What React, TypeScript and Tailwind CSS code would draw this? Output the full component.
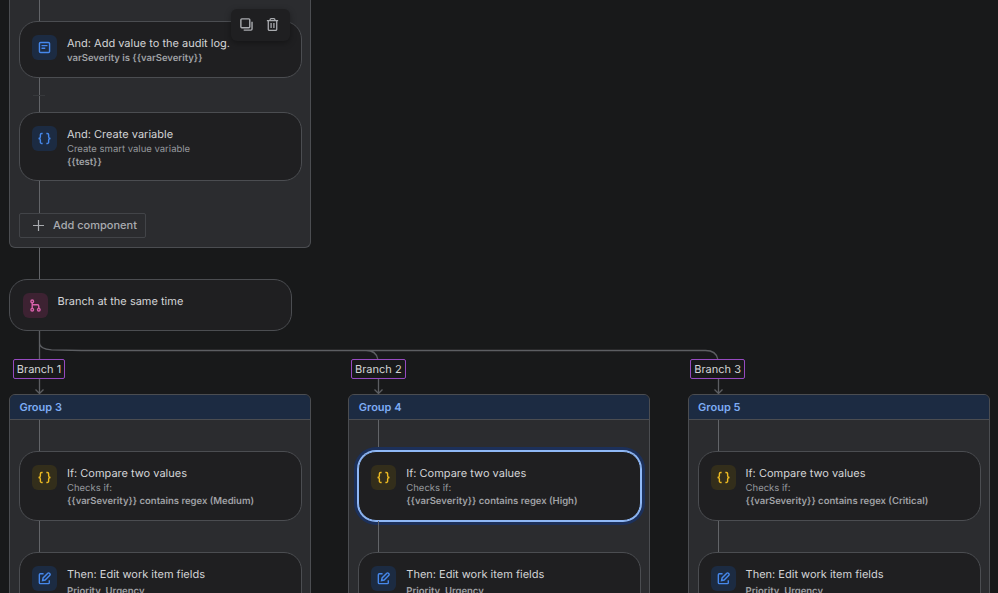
import type { ReactNode } from "react";
import clsx from "clsx";

type IconName = "log" | "blue-braces" | "yellow-braces" | "edit" | "branch";

const iconColors: Record<IconName, string> = {
  log: "bg-[#1c2b42] text-[#4688ec]",
  "blue-braces": "bg-[#1c2b42] text-[#4688ec]",
  "yellow-braces": "bg-[#332e1b] text-[#eebb22]",
  edit: "bg-[#1c2b42] text-[#4688ec]",
  branch: "bg-[#3d2232] text-[#da62ac]",
};

function Icon({ name }: { name: IconName }) {
  return (
    <div
      className={clsx(
        "flex size-[25px] shrink-0 items-center justify-center rounded-[6px]",
        iconColors[name],
      )}>
      <svg
        viewBox="0 0 16 16"
        className="size-[15px]"
        fill="none"
        stroke="currentColor"
        strokeWidth="1.5">
        {name === "log" && (
          <>
            <rect x="2.6" y="2.6" width="10.8" height="10.8" rx="1.2" />
            <path d="M4.8 6h6.4M4.8 8.8h4" />
          </>
        )}
        {(name === "blue-braces" || name === "yellow-braces") && (
          <path d="M6 2.7h-1a1.4 1.4 0 0 0-1.400 1.400v2.400c0 .9-.5 1.500-2 1.500 1.500 0 2 .6 2 1.500v2.400a1.400 1.400 0 0 0 1.400 1.400H6M10 2.700h1a1.400 1.400 0 0 1 1.400 1.400v2.400c0 .9.5 1.500 2 1.500-1.500 0-2 .6-2 1.500v2.400a1.400 1.400 0 0 1-1.400 1.400H10" />
        )}
        {name === "edit" && (
          <>
            <path d="M7 2.900H3.500a1 1 0 0 0-1 1v8.600a1 1 0 0 0 1 1h8.600a1 1 0 0 0 1-1V9.800" />
            <path d="m5.900 10.200.6-2.800 5-5a1.200 1.200 0 0 1 1.700 0l.5.5a1.200 1.200 0 0 1 0 1.700l-5 5z" />
          </>
        )}
        {name === "branch" && (
          <>
            <circle cx="4.500" cy="3.600" r="1.400" />
            <circle cx="4.500" cy="12.500" r="1.400" />
            <circle cx="11.500" cy="12.500" r="1.400" />
            <path d="M4.500 5v6M4.500 7.200h5.500a1.500 1.500 0 0 1 1.500 1.500v2.400" />
          </>
        )}
      </svg>
    </div>
  );
}

type CardProps = {
  icon: IconName;
  title: string;
  caption?: string;
  detail?: string;
  selected?: boolean;
  className?: string;
};

function Card({ icon, title, caption, detail, selected, className }: CardProps) {
  return (
    <div
      className={clsx(
        "flex w-[283px] shrink-0 gap-[10px] rounded-[18px] border bg-[#1f1f21] pt-[13px]",
        icon === "branch" ? "pl-[12.500px]" : "pl-3",
        selected
          ? "border-[#8fb8f6] shadow-[0_0_0_1px_#8fb8f6,0_0_0_4px_#1c305a]"
          : "border-[#4b4d51]",
        className,
      )}>
      <Icon name={icon} />
      <div className="whitespace-nowrap">
        <div className="text-[11px] leading-4 text-[#d4d5d7]">{title}</div>
        {caption && (
          <div className="mt-0.5 text-[9.500px] leading-[12.500px] text-[#96999e]">{caption}</div>
        )}
        {detail && (
          <div
            className={clsx(
              "text-[9.500px] leading-[12.500px] font-semibold text-[#a0a2a6]",
              !caption && (icon === "edit" ? "mt-1" : "mt-0.5"),
            )}>
            {detail}
          </div>
        )}
      </div>
    </div>
  );
}

function Line({ className }: { className: string }) {
  return <div className={clsx("w-px shrink-0 bg-[#626468]", className)} />;
}

function Group({ title, children }: { title: string; children: ReactNode }) {
  return (
    <div className="h-[220px] w-[302px] overflow-hidden rounded-[6px] border border-[#4b4d51] bg-[#2b2c2f]">
      <div className="h-[25px] border-b border-[#4b4d51] bg-[#1c2b42] pl-[9.500px] text-[11px] leading-6 font-semibold text-[#7eadf5]">
        {title}
      </div>
      <div className="flex flex-col pl-[9px]">{children}</div>
    </div>
  );
}

function BranchColumn({
  branch,
  group,
  value,
  selected,
}: {
  branch: string;
  group: string;
  value: string;
  selected?: boolean;
}) {
  return (
    <div className="flex w-[302px] shrink-0 flex-col">
      <div className="flex w-[60px] flex-col items-center">
        <div className="flex h-5 items-center rounded-[2px] border border-[#964ac0] bg-[#18191a] px-[3px] text-[11px] whitespace-nowrap text-[#d4d5d7]">
          {branch}
        </div>
        <svg viewBox="0 0 10 15" className="h-[15px] w-[10px]" fill="none" stroke="#5c5e62" strokeWidth="1.300">
          <path d="M5.500 0v14M1.500 10.500l4 4 4-4" />
        </svg>
      </div>
      <Group title={group}>
        <Line className="ml-[20px] h-[31px]" />
        <Card
          icon="yellow-braces"
          title="If: Compare two values"
          caption="Checks if:"
          detail={"{{varSeverity}} contains regex (" + value + ")"}
          selected={selected}
          className="h-[70px]"
        />
        <Line className="ml-[20px] h-[31px]" />
        <Card icon="edit" title="Then: Edit work item fields" detail="Priority, Urgency" className="h-[70px]" />
      </Group>
    </div>
  );
}

function HoverActions() {
  return (
    <div className="absolute top-[9px] left-[231px] flex h-8 w-[59px] items-center gap-[11px] rounded-[6px] bg-[#1f1f21] pb-px pl-2 text-[#a9abaf] shadow-[0_2px_6px_rgba(0,0,0,0.35)]">
      <svg viewBox="0 0 16 16" className="size-[15px]" fill="none" stroke="currentColor" strokeWidth="1.500">
        <rect x="2" y="2" width="9.500" height="9.500" rx="1" />
        <path d="M13.900 5v7.800a1.200 1.200 0 0 1-1.200 1.200H5" />
      </svg>
      <svg viewBox="0 0 16 16" className="size-[15px]" fill="none" stroke="currentColor" strokeWidth="1.400">
        <path d="M2 3.900h12M5.500 3.900V2.700a1 1 0 0 1 1-1h3a1 1 0 0 1 1 1v1.200M3.500 3.900v9.200a1.200 1.200 0 0 0 1.200 1.200h6.600a1.200 1.200 0 0 0 1.200-1.200V3.900M6.500 6.500v5.300M9.500 6.500v5.300" />
      </svg>
    </div>
  );
}

export default function App() {
  return (
    <div className="relative h-[593px] w-[998px] overflow-hidden bg-[#18191a] font-['Inter',sans-serif] [text-rendering:geometricPrecision]">
      <div className="flex flex-col pl-[9px]">
        <div className="flex h-[248px] w-[302px] flex-col rounded-b-[6px] border border-t-0 border-[#4b4d51] bg-[#2b2c2f] pl-[9px]">
          <Line className="ml-[20px] h-[21px]" />
          <Card
            icon="log"
            title="And: Add value to the audit log."
            detail="varSeverity is {{varSeverity}}"
            className="h-[57px]"
          />
          <div className="flex h-[34px]">
            <Line className="ml-[20px] h-[34px]" />
            <svg viewBox="0 0 14 14" className="mt-[10px] -ml-[8px] size-[14px]" stroke="#37393c">
              <path d="M1 7.500h12" />
            </svg>
          </div>
          <Card
            icon="blue-braces"
            title="And: Create variable"
            caption="Create smart value variable"
            detail="{{test}}"
            className="h-[69px]"
          />
          <Line className="ml-[20px] h-8" />
          <button className="flex h-[25px] w-[127px] items-center gap-[8px] rounded-[2px] border border-[#424448] pl-3 text-[11px] font-medium whitespace-nowrap text-[#a9abaf]">
            <svg viewBox="0 0 13 13" className="size-[13px]" stroke="currentColor" strokeWidth="1.200">
              <path d="M1 6.500h11M6.500 1v11" />
            </svg>
            Add component
          </button>
        </div>
        <Line className="ml-[30px] h-[31px]" />
        <Card icon="branch" title="Branch at the same time" className="h-[52px]" />
        <svg
          viewBox="0 0 740 28"
          className="h-7 w-[740px]"
          fill="none"
          stroke="#5c5e62"
          strokeWidth="1.300">
          <path d="M30.500 0v28M30.500 0v12q0 6 12 6.800l30 .7h624q12.500 0 12.500 12M357 19.500q12 0 12 12" />
        </svg>
      </div>
      <div className="flex gap-[37.300px] pl-[9px]">
        <BranchColumn branch="Branch 1" group="Group 3" value="Medium" />
        <BranchColumn branch="Branch 2" group="Group 4" value="High" selected />
        <BranchColumn branch="Branch 3" group="Group 5" value="Critical" />
      </div>
      <HoverActions />
    </div>
  );
}
